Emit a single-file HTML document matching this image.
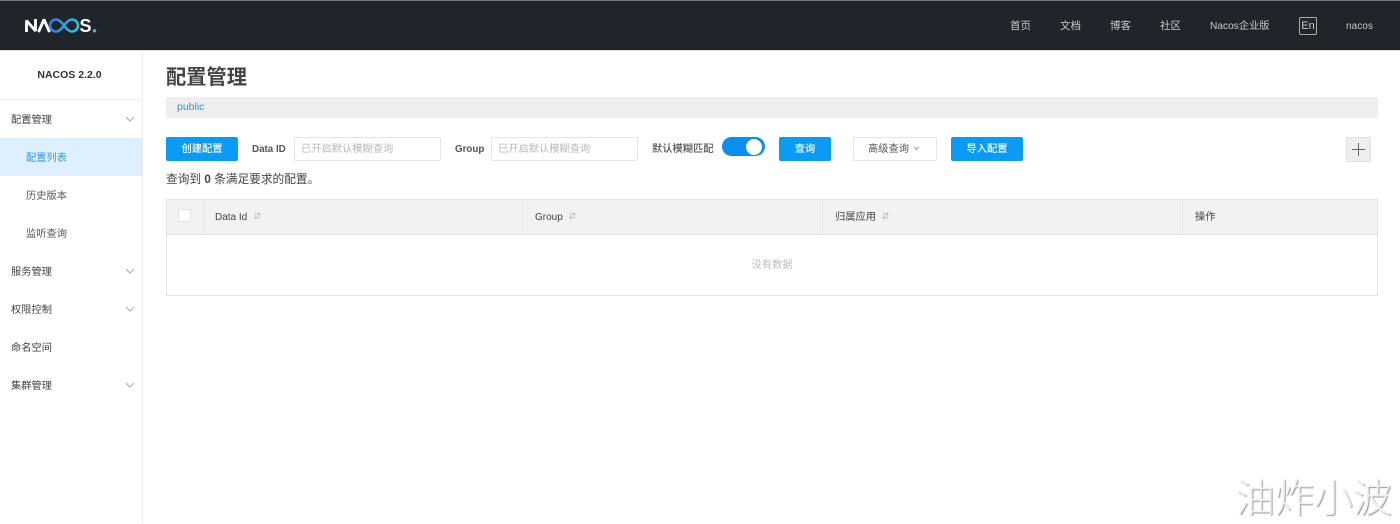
<!DOCTYPE html>
<html lang="zh"><head><meta charset="utf-8"><title>Nacos</title>
<style>
html,body{margin:0;padding:0;background:#fff}
body{width:1400px;height:523px;position:relative;overflow:hidden;font-family:"Liberation Sans","Noto Sans CJK SC",sans-serif;color:#333}
.a{position:absolute;white-space:nowrap}
.nav{top:18px;font-size:10.5px;line-height:16px;color:#c8cacc}
.m{left:11px;font-size:10.25px;line-height:16px;color:#444}
.s{left:26px;font-size:10.25px;line-height:16px;color:#555}
.btn{background:#0a9bf5;color:#fff;font-size:10.25px;text-align:center;border-radius:2px;height:24px;line-height:26px;top:137px;font-weight:500}
.inp{top:137px;height:22px;border:1px solid #e3e5e8;border-radius:2px;width:145px;font-size:10.25px;line-height:24px;color:#b8b8b8;text-indent:6px}
.lbl{top:142px;font-size:9.8px;line-height:16px;font-weight:bold;color:#555}
.th{top:210px;font-size:10px;line-height:16px;color:#444}
.so{top:211px;font-size:7px;line-height:12px;color:#999}
.div{top:200px;height:34px;width:1px;background:#e8e8e8}
.ch{left:125px}
</style></head><body>
<div class="a" style="left:0;top:0;width:1400px;height:51px;background:#212529;border-top:1px solid #777;border-bottom:1px solid #ddd;box-sizing:border-box"></div>
<svg class="a" style="left:24px;top:16px" width="76" height="20" viewBox="0 0 76 20">
<defs><linearGradient id="g" x1="0" x2="1" y1="0" y2="0"><stop offset="0" stop-color="#2f7fe8"/><stop offset="1" stop-color="#25c6dc"/></linearGradient></defs>
<path d="M2.500 16V4.500L11.500 15V3" fill="none" stroke="#fff" stroke-width="2.800" stroke-linejoin="bevel"/>
<path d="M14.500 16L20 3.500L25.500 16" fill="none" stroke="#fff" stroke-width="2.800" stroke-linejoin="bevel"/>
<path d="M40 9.500C37.500 6 35 3.500 32 3.500C28.500 3.500 26 6.500 26 9.500C26 12.500 28.500 15.500 32 15.500C35 15.500 37.500 13 40 9.500C42.500 6 45 3.500 48 3.500C51.500 3.500 54 6.500 54 9.500C54 12.500 51.500 15.500 48 15.500C45 15.500 42.500 13 40 9.500Z" fill="none" stroke="url(#g)" stroke-width="2.600"/>
<text x="55.500" y="16" font-family="Liberation Sans" font-size="18" font-weight="bold" fill="#fff">S</text>
<circle cx="70.500" cy="14.800" r="1.700" fill="#25c6dc"/>
</svg>
<div class="a nav" style="left:1010px">首页</div>
<div class="a nav" style="left:1060px">文档</div>
<div class="a nav" style="left:1110px">博客</div>
<div class="a nav" style="left:1160px">社区</div>
<div class="a nav" style="left:1210px;top:19px;font-size:10.2px">Nacos企业版</div>
<div class="a" style="left:1299px;top:17px;width:16px;height:16px;border:1px solid #aaa;border-radius:2px;font-size:11px;line-height:16px;text-align:center;color:#ccc">En</div>
<div class="a nav" style="left:1346px;top:19px;font-size:9.800px;letter-spacing:.2px">nacos</div>

<div class="a" style="left:142px;top:51px;width:1px;height:472px;background:#e9ecef"></div>
<div class="a" style="left:0;top:99px;width:142px;height:1px;background:#eee"></div>
<div class="a" style="left:0;top:67px;width:139px;text-align:center;font-size:10.500px;line-height:16px;font-weight:bold;color:#333">NACOS 2.2.0</div>
<div class="a" style="left:0;top:138px;width:142px;height:38px;background:#def0fd"></div>
<div class="a m" style="top:113px">配置管理</div>
<div class="a s" style="top:151px;color:#2a9bee">配置列表</div>
<div class="a s" style="top:189px">历史版本</div>
<div class="a s" style="top:227px">监听查询</div>
<div class="a m" style="top:265px">服务管理</div>
<div class="a m" style="top:303px">权限控制</div>
<div class="a m" style="top:341px">命名空间</div>
<div class="a m" style="top:379px">集群管理</div>
<svg class="a ch" style="top:115px" width="10" height="8"><path d="M1 2L5 6L9 2" fill="none" stroke="#aaa"/></svg>
<svg class="a ch" style="top:267px" width="10" height="8"><path d="M1 2L5 6L9 2" fill="none" stroke="#aaa"/></svg>
<svg class="a ch" style="top:305px" width="10" height="8"><path d="M1 2L5 6L9 2" fill="none" stroke="#aaa"/></svg>
<svg class="a ch" style="top:381px" width="10" height="8"><path d="M1 2L5 6L9 2" fill="none" stroke="#aaa"/></svg>

<div class="a" style="left:166px;top:64px;font-size:20.250px;line-height:28px;font-weight:700;color:#444">配置管理</div>
<div class="a" style="left:166px;top:97px;width:1212px;height:21px;background:#eee;border-radius:2px"></div>
<div class="a" style="left:177px;top:99px;font-size:10.500px;line-height:16px;color:#2a9bee">public</div>

<div class="a btn" style="left:166px;width:72px">创建配置</div>
<div class="a lbl" style="left:252px">Data ID</div>
<div class="a inp" style="left:294px">已开启默认模糊查询</div>
<div class="a lbl" style="left:455px">Group</div>
<div class="a inp" style="left:491px">已开启默认模糊查询</div>
<div class="a lbl" style="left:652px;font-size:10.250px;font-weight:500">默认模糊匹配</div>
<div class="a" style="left:722px;top:137px;width:43px;height:19px;background:#0a8ff0;border-radius:10px"></div>
<div class="a" style="left:746px;top:138.500px;width:16px;height:16px;background:#fff;border-radius:50%"></div>
<div class="a btn" style="left:779px;width:52px">查询</div>
<div class="a" style="left:853px;top:137px;width:82px;height:22px;border:1px solid #e3e5e8;border-radius:2px;font-size:10.250px;line-height:24px;color:#555;text-indent:14px">高级查询</div>
<svg class="a" style="left:913px;top:146px" width="7" height="5"><path d="M1 1L3.500 3.500L6 1" fill="none" stroke="#999"/></svg>
<div class="a btn" style="left:951px;width:72px">导入配置</div>
<div class="a" style="left:1346px;top:137px;width:23px;height:23px;background:#eee;border:1px solid #e2e2e2"></div>
<svg class="a" style="left:1352px;top:143px" width="13" height="13"><path d="M6.500 0V13M0 6.500H13" stroke="#666" fill="none"/></svg>

<div class="a" style="left:166px;top:172px;font-size:11.700px;line-height:16px;color:#444">查询到 <b>0</b> 条满足要求的配置。</div>

<div class="a" style="left:166px;top:199px;width:1210px;height:95px;border:1px solid #e4e4e4"></div>
<div class="a" style="left:167px;top:200px;width:1210px;height:34px;background:#f2f2f2;border-bottom:1px solid #e4e4e4"></div>
<div class="a div" style="left:203px"></div>
<div class="a div" style="left:522px"></div>
<div class="a div" style="left:822px"></div>
<div class="a div" style="left:1182px"></div>
<div class="a" style="left:178px;top:209px;width:11px;height:11px;background:#fff;border:1px solid #e2e2e2;border-radius:2px"></div>
<div class="a th" style="left:215px">Data Id</div><div class="a so" style="left:254px">⇵</div>
<div class="a th" style="left:535px">Group</div><div class="a so" style="left:569px">⇵</div>
<div class="a th" style="left:835px;font-size:10.250px">归属应用</div><div class="a so" style="left:882px">⇵</div>
<div class="a th" style="left:1195px;font-size:10.250px">操作</div>
<div class="a" style="left:167px;top:258px;width:1210px;text-align:center;font-size:10.250px;line-height:16px;color:#bbb">没有数据</div>

<div class="a" style="left:1236px;top:473px;font-size:39px;line-height:46px;color:#f2f2f2;font-family:'Noto Sans CJK SC',sans-serif;font-weight:300;text-shadow:1px 1px 1px #999">油炸小波</div>
</body></html>
